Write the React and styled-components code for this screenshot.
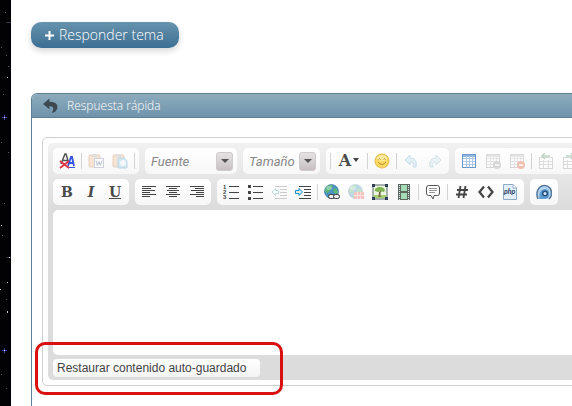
import React, {useState} from 'react'
import styled, {createGlobalStyle} from 'styled-components';

const GlobalStyle = createGlobalStyle`

    * { box-sizing: border-box; }

    body {
        margin: 0;
        background-color: #fff;
        font-family: Roboto, "Liberation Sans", sans-serif;
        font-size: 13px;
        overflow: hidden;
    }

    button, select, textarea { font-family: inherit; }
`;

const Layout = styled.div`
    display: flex;
    min-height: 100vh;
`;

const Space = styled.aside`
    flex: 0 0 11px;
    background-color: #020204;
    overflow: hidden;

    svg { display: block; }
`;

const Main = styled.main`
    flex: 1;
    min-width: 0;
    display: flex;
    flex-direction: column;
    align-items: flex-start;
    padding: 22px 0 0 20px;
    overflow: hidden;
`;

const ReplyLink = styled.a`
    display: flex;
    align-items: center;
    gap: 5px;
    height: 26px;
    padding: 0 15px 0 14px;
    border-radius: 10px;
    background-image: linear-gradient(#6793ad, #3c6f93);
    box-shadow: 0 3px 6px rgba(0, 0, 0, .16);
    color: #fff;
    font-family: "Open Sans", "Noto Sans", sans-serif;
    font-size: 14px;
    font-weight: 300;
    line-height: 24px;
    text-decoration: none;
`;

const Panel = styled.section`
    flex: 1;
    width: 100%;
    min-width: 680px;
    margin-top: 45px;
    border: 1px solid #5e7f94;
    border-bottom: 0;
    border-radius: 6px 6px 0 0;
    overflow: hidden;
`;

const PanelTitle = styled.h2`
    display: flex;
    align-items: center;
    gap: 8px;
    height: 24px;
    margin: 0;
    padding: 0 10px;
    border-bottom: 1px solid #5e7f94;
    background-image: linear-gradient(#8dabbd, #6f94ac);
    color: #fff;
    font-family: "Open Sans", "Noto Sans", sans-serif;
    font-size: 12px;
    font-weight: 300;
`;

const Editor = styled.div`
    margin: 19px 10px;
    padding: 5px;
    border: 1px solid #d0d0d0;
    border-radius: 5px;
`;

const EditorBody = styled.div`
    padding: 5px 5px 3px;
    border-radius: 5px;
    background: #dcdcdc linear-gradient(#f1f1f1, #dcdcdc) no-repeat;
    background-size: 100% 64px;
`;

const ToolRow = styled.div`
    display: flex;
    gap: 6px;
    margin-bottom: 5px;
`;

const ToolGroup = styled.div`
    flex: none;
    display: flex;
    align-items: center;
    height: 26px;
    padding: 0 2px;
    border-radius: 5px;
    background-image: linear-gradient(#fff, #f7f7f7);
`;

const ToolButton = styled.button`
    display: flex;
    align-items: center;
    justify-content: center;
    gap: 2px;
    width: ${props => props.$wide ? '32px' : '24px'};
    height: 24px;
    padding: 0;
    border: 0;
    background: none;
    opacity: ${props => props.disabled ? '.35' : '1'};

    svg { display: block; flex: none; }
`;

const Separator = styled.span`
    width: 1px;
    height: 16px;
    margin: 0 2px;
    background-color: #d2d2d2;
`;

const Letter = styled.span`
    color: #4a4a4a;
    font-family: "DejaVu Serif", serif;
    font-size: ${props => props.$size || '14px'};
    font-weight: bold;
    font-style: ${props => props.$italic ? 'italic' : 'normal'};
    text-decoration: ${props => props.$underline ? 'underline' : 'none'};
    line-height: 16px;
`;

const Combo = styled.label`
    position: relative;
    display: flex;
    align-items: center;
    width: ${props => props.$width};
    height: 24px;
`;

const ComboSelect = styled.select`
    width: 100%;
    height: 24px;
    padding: 0 20px 0 4px;
    border: 0;
    appearance: none;
    background: none;
    color: #888;
    font-size: 13px;
    font-style: italic;
`;

const ComboArrow = styled.span`
    position: absolute;
    right: 2px;
    display: flex;
    align-items: center;
    justify-content: center;
    width: 17px;
    height: 19px;
    border: 1px solid #cfcacb;
    border-radius: 3px;
    background-image: linear-gradient(#e6e2e3, #c6c0c2);
    pointer-events: none;
`;

const Content = styled.textarea`
    display: block;
    width: 100%;
    height: 145px;
    padding: 8px;
    border: 0;
    border-radius: 5px;
    outline: 0;
    resize: none;
    background-color: #fff;
`;

const Footer = styled.div`
    display: flex;
    padding-top: 4px;
`;

// keeps the red mark around the restore button
const Callout = styled.div`
    position: relative;

    &::after {
        content: '';
        position: absolute;
        inset: -17px -23px -18px -18px;
        border: 3px solid #d9100f;
        border-radius: 10px;
        pointer-events: none;
    }
`;

const RestoreButton = styled.button`
    display: block;
    min-width: 207px;
    height: 18px;
    padding: 0 7px 0 4px;
    border: 0;
    border-radius: 4px;
    background-image: linear-gradient(#fff, #f4f4f4);
    color: #444;
    font-family: "Liberation Sans", Arial, sans-serif;
    font-size: 12px;
    line-height: 18px;
    text-align: left;
`;

const Icon = ({children, size = 16}) => (
    <svg width={size} height={size} viewBox="0 0 16 16" fill="none" aria-hidden="true">{children}</svg>
)

const Lines = ({rows, color = '#444'}) => rows.map(([x1, x2, y]) => (
    <rect key={y} x={x1} y={y} width={x2 - x1} height="1" fill={color} />
))

const Stars = () => (
    <svg width="11" height="406" aria-hidden="true">
        <g fill="#5a5a66">
            <rect x="5" y="12" width="1" height="1" /><rect x="6" y="55" width="1" height="1" />
            <rect x="1" y="47" width="1" height="1" /><rect x="8" y="66" width="1" height="1" />
            <rect x="3" y="94" width="1" height="1" /><rect x="1" y="142" width="1" height="1" />
            <rect x="8" y="152" width="1" height="1" /><rect x="4" y="203" width="1" height="1" />
            <rect x="2" y="235" width="1" height="1" /><rect x="6" y="299" width="1" height="1" />
            <rect x="1" y="374" width="1" height="1" /><rect x="6" y="388" width="1" height="1" />
        </g>
        <g fill="#c8c8e0">
            <rect x="1" y="225" width="1" height="1" /><rect x="7" y="282" width="1" height="1" />
            <rect x="0" y="289" width="1" height="1" /><rect x="7" y="77" width="1" height="1" />
            <rect x="7" y="311" width="1" height="2" /><rect x="10" y="22" width="1" height="1" />
        </g>
        <path d="M6 22.5H11M6 257.5H11" stroke="#33374a" />
        <path d="M2 117.5H7M4.5 115V120M2 350.5H7M4.5 348V353" stroke="#3b3b98" />
        <rect x="4" y="117" width="1" height="1" fill="#dde" />
        <rect x="4" y="350" width="1" height="1" fill="#dde" />
        <rect x="9" y="257" width="1" height="1" fill="#dde" />
    </svg>
)

const Clipboard = ({children}) => (
    <Icon>
        <rect x="1" y="2" width="11" height="12" rx="1" fill="#f0b884" stroke="#c58a5a" />
        <rect x="4" y="1" width="5" height="3" fill="#aaa" />
        {children}
    </Icon>
)

const Outdent = () => (
    <Icon>
        <Lines rows={[[4, 16, 2], [9, 16, 5], [9, 16, 8], [9, 16, 11], [4, 16, 14]]} color="#777" />
        <path d="M1 8L4.5 4.5V6.5H7.5V9.5H4.5V11.5Z" fill="#fff" stroke="#3b9fc2" />
    </Icon>
)

const Indent = () => (
    <Icon>
        <Lines rows={[[4, 16, 2], [9, 16, 5], [9, 16, 8], [9, 16, 11], [4, 16, 14]]} />
        <path d="M7.5 8L4 4.5V6.5H.5V9.5H4V11.5Z" fill="#d5effa" stroke="#168bbd" />
    </Icon>
)

const NumberedList = () => (
    <Icon>
        <Lines rows={[[6, 16, 2], [6, 16, 8], [6, 16, 14]]} />
        <g fill="#444" fontSize="6" fontWeight="bold" fontFamily="Liberation Sans, sans-serif">
            <text x="0" y="5">1</text><text x="0" y="10">2</text><text x="0" y="15">3</text>
        </g>
    </Icon>
)

const BulletList = () => (
    <Icon>
        <Lines rows={[[6, 16, 2], [6, 16, 8], [6, 16, 14]]} />
        <g fill="#444">
            <rect x="1" y="1" width="3" height="3" /><rect x="1" y="7" width="3" height="3" /><rect x="1" y="13" width="3" height="3" />
        </g>
    </Icon>
)

const Globe = ({children}) => (
    <Icon>
        <circle cx="7.5" cy="7.5" r="7" fill="#4a93c4" stroke="#3b749c" strokeWidth=".6" />
        <path d="M1 7C1 3 4 1 7 1C10 1 9 3 7 4C8 6 5 6 5 8C4 10 2 9 1 7ZM9 5C12 3 14 6 14 8C13 11 11 10 10 9ZM4 11L8 10L9 14L6 14Z" fill="#59b678" />
        <ellipse cx="5" cy="4" rx="3" ry="2" fill="#fff" opacity=".35" />
        {children}
    </Icon>
)

const Table = ({mark}) => (
    <Icon>
        <rect x="1.5" y="1.5" width="13" height="13" fill="#fff" stroke={mark ? '#999' : '#6a97cc'} />
        <rect x="2" y="2" width="12" height="2" fill={mark ? '#bbb' : '#8fb6df'} />
        <path d="M2 5.5H14M2 8.5H14M2 11.5H14M5.5 3V14M8.5 3V14M11.5 3V14" stroke={mark ? '#bbb' : '#a9c5e8'} />
        {mark && <>
            <circle cx="12" cy="12" r="4" fill={mark} />
            <path d="M10 12H14" stroke="#fff" strokeWidth="1.5" />
        </>}
    </Icon>
)

const TableInsert = ({flip}) => (
    <Icon>
        <rect x="1.5" y="4.5" width="13" height="11" fill="#fff" stroke="#999" />
        <path d="M2 8.5H14M2 11.5H14M5.5 7V15M10.5 7V15" stroke="#aaa" />
        <path d={flip ? 'M4 3H12M9 0L12 3L9 6' : 'M12 3H4M7 0L4 3L7 6'} stroke="#4f8d5f" strokeWidth="1.5" />
    </Icon>
)

const App = () => {
    const [text, setText] = useState('')

    return (
        <>
            <GlobalStyle />
            <Layout>
                <Space><Stars /></Space>
                <Main>
                    <ReplyLink href="#respuesta">
                        <svg width="9" height="9" aria-hidden="true"><path d="M4.5 0V9M0 4.5H9" stroke="#fff" strokeWidth="2" /></svg>
                        Responder tema
                    </ReplyLink>

                    <Panel id="respuesta">
                        <PanelTitle>
                            <Icon size={17}>
                                <path d="M1 6.5L7 1.5V4.5C12 4 15 7 14.5 10C14 13 11.5 14.5 9 15C11.5 12 11.5 8.5 7 8.5V11.5Z" fill="#3d4850" />
                            </Icon>
                            Respuesta rápida
                        </PanelTitle>

                        <Editor>
                            <EditorBody>
                                <ToolRow>
                                    <ToolGroup>
                                        <ToolButton aria-label="Quitar formato">
                                            <Icon>
                                                <path d="M2 11L6 1H7L10 11M3.5 7.5H9" stroke="#555" strokeWidth="1.5" />
                                                <path d="M9 13L12 4H13L15 13M10 10H14" stroke="#3454e0" strokeWidth="1.8" />
                                                <path d="M8 14.5H16" stroke="#3454e0" />
                                                <path d="M1 8L10 15M10 8L1 15" stroke="#e23440" strokeWidth="1.8" />
                                            </Icon>
                                        </ToolButton>
                                        <Separator />
                                        <ToolButton disabled aria-label="Pegar desde Word">
                                            <Clipboard>
                                                <rect x="6.5" y="5.5" width="9" height="9" fill="#fff" stroke="#7787a8" />
                                                <path d="M8 7.5L9.5 12.5L11 8.5L12.5 12.5L14 7.5" stroke="#34507f" />
                                            </Clipboard>
                                        </ToolButton>
                                        <ToolButton disabled aria-label="Pegar">
                                            <Clipboard>
                                                <path d="M6 5H12L15 8V15H6Z" fill="#8cc5e5" stroke="#5597bd" />
                                                <circle cx="11" cy="10" r="3" fill="#e6f5ff" />
                                            </Clipboard>
                                        </ToolButton>
                                        <Separator />
                                    </ToolGroup>
                                    <ToolGroup>
                                        <Combo $width="88px">
                                            <ComboSelect aria-label="Fuente"><option>Fuente</option></ComboSelect>
                                            <ComboArrow><svg width="8" height="4" aria-hidden="true"><path d="M0 0H8L4 4Z" fill="#555" /></svg></ComboArrow>
                                        </Combo>
                                    </ToolGroup>
                                    <ToolGroup>
                                        <Combo $width="73px">
                                            <ComboSelect aria-label="Tamaño"><option>Tamaño</option></ComboSelect>
                                            <ComboArrow><svg width="8" height="4" aria-hidden="true"><path d="M0 0H8L4 4Z" fill="#555" /></svg></ComboArrow>
                                        </Combo>
                                    </ToolGroup>
                                    <ToolGroup>
                                        <Separator />
                                        <ToolButton $wide aria-label="Color de texto">
                                            <Letter $size="16px">A</Letter>
                                            <svg width="6" height="6" aria-hidden="true"><path d="M0 0H6L3 4Z" fill="#444" /></svg>
                                        </ToolButton>
                                        <Separator />
                                        <ToolButton aria-label="Emoticonos">
                                            <Icon>
                                                <circle cx="8" cy="8" r="7" fill="#fada62" stroke="#e3b647" />
                                                <ellipse cx="8" cy="5" rx="5" ry="3" fill="#fff" opacity=".4" />
                                                <path d="M4.5 6.5Q5.5 5 6.5 6.5M9.5 6.5Q10.5 5 11.5 6.5M4 9Q8 14 12 9" stroke="#bd8a2c" />
                                            </Icon>
                                        </ToolButton>
                                        <Separator />
                                        <ToolButton disabled aria-label="Deshacer">
                                            <Icon><path d="M2 7L7 2V5C12 5 14 8 13 14H10C11 10 10 9 7 9V12Z" fill="#b6dcef" stroke="#6ba9cc" /></Icon>
                                        </ToolButton>
                                        <ToolButton disabled aria-label="Rehacer">
                                            <Icon><path d="M14 7L9 2V5C4 5 2 8 3 14H6C5 10 6 9 9 9V12Z" fill="#c9e2ea" stroke="#86b7c9" /></Icon>
                                        </ToolButton>
                                    </ToolGroup>
                                    <ToolGroup>
                                        <ToolButton aria-label="Tabla"><Table /></ToolButton>
                                        <ToolButton disabled aria-label="Propiedades de tabla"><Table mark="#9a9a9a" /></ToolButton>
                                        <ToolButton disabled aria-label="Eliminar tabla"><Table mark="#e0562b" /></ToolButton>
                                        <Separator />
                                        <ToolButton disabled aria-label="Insertar fila antes"><TableInsert /></ToolButton>
                                        <ToolButton disabled aria-label="Insertar fila después"><TableInsert flip /></ToolButton>
                                    </ToolGroup>
                                </ToolRow>

                                <ToolRow>
                                    <ToolGroup>
                                        <ToolButton aria-label="Negrita"><Letter>B</Letter></ToolButton>
                                        <ToolButton aria-label="Cursiva"><Letter $italic>I</Letter></ToolButton>
                                        <ToolButton aria-label="Subrayado"><Letter $underline>U</Letter></ToolButton>
                                    </ToolGroup>
                                    <ToolGroup>
                                        <ToolButton aria-label="Alinear a la izquierda">
                                            <Icon><Lines rows={[[1, 15, 2], [1, 10, 4], [1, 14, 6], [1, 9, 8], [1, 15, 10], [1, 9, 12]]} /></Icon>
                                        </ToolButton>
                                        <ToolButton aria-label="Centrar">
                                            <Icon><Lines rows={[[1, 15, 2], [4, 12, 4], [2, 14, 6], [4, 12, 8], [1, 15, 10], [4, 12, 12]]} /></Icon>
                                        </ToolButton>
                                        <ToolButton aria-label="Alinear a la derecha">
                                            <Icon><Lines rows={[[1, 15, 2], [6, 15, 4], [2, 15, 6], [7, 15, 8], [1, 15, 10], [7, 15, 12]]} /></Icon>
                                        </ToolButton>
                                    </ToolGroup>
                                    <ToolGroup>
                                        <ToolButton aria-label="Lista numerada"><NumberedList /></ToolButton>
                                        <ToolButton aria-label="Lista"><BulletList /></ToolButton>
                                        <ToolButton disabled aria-label="Reducir sangría"><Outdent /></ToolButton>
                                        <ToolButton aria-label="Aumentar sangría"><Indent /></ToolButton>
                                        <Separator />
                                        <ToolButton aria-label="Enlace">
                                            <Globe>
                                                <rect x="4.5" y="10.5" width="6" height="4" rx="2" fill="#eee" stroke="#333" />
                                                <rect x="9.5" y="10.5" width="6" height="4" rx="2" fill="#eee" stroke="#333" />
                                            </Globe>
                                        </ToolButton>
                                        <ToolButton disabled aria-label="Quitar enlace">
                                            <Globe><rect x="6" y="8" width="10" height="7" fill="#e66055" /><path d="M6 11.5H16M9.5 8V15M12.5 8V15" stroke="#f7b6ae" /></Globe>
                                        </ToolButton>
                                        <ToolButton aria-label="Imagen">
                                            <Icon>
                                                <rect x="1" y="1" width="14" height="14" fill="#eaf5df" stroke="#5b6a70" />
                                                <rect x="2" y="11" width="12" height="3" fill="#a5cd70" />
                                                <path d="M7 13L7.5 8L5 6M8 13V8L11 6" stroke="#6b5530" />
                                                <path d="M3 7C2 5 5 3 8 3C12 3 14 6 12 8L9 7L6 8Z" fill="#7fb551" />
                                                <path d="M0 0H3V3H0ZM13 0H16V3H13ZM0 13H3V16H0ZM13 13H16V16H13Z" fill="#2f3f56" />
                                            </Icon>
                                        </ToolButton>
                                        <ToolButton aria-label="Vídeo">
                                            <Icon>
                                                <rect x="2" y="0" width="12" height="16" fill="#5a6a62" />
                                                <path d="M5 1H11V7H5ZM5 9H11V15H5Z" fill="#a8d9b5" />
                                                <path d="M3.5 1V16M12.5 1V16" stroke="#e5ece8" strokeDasharray="1 1" />
                                            </Icon>
                                        </ToolButton>
                                        <Separator />
                                        <ToolButton aria-label="Cita">
                                            <Icon>
                                                <path d="M3.5 1.5H12.5Q14.5 1.5 14.5 4V9Q14.5 11.5 12.5 11.5H9L8 15L6 11.5H3.5Q1.5 11.5 1.5 9V4Q1.5 1.5 3.5 1.5Z" fill="#fff" stroke="#555" />
                                                <path d="M4 4.5H12M4 6.5H12M4 8.5H10" stroke="#999" />
                                            </Icon>
                                        </ToolButton>
                                        <Separator />
                                        <ToolButton aria-label="Código">
                                            <Icon><path d="M6.5 2L4.5 14M11.5 2L9.5 14M3 6H14M2 10.5H13" stroke="#444" strokeWidth="1.8" /></Icon>
                                        </ToolButton>
                                        <ToolButton aria-label="HTML">
                                            <Icon><path d="M6 2.5L1.5 8L6 13.5M10 2.5L14.5 8L10 13.5" stroke="#444" strokeWidth="2.2" /></Icon>
                                        </ToolButton>
                                        <ToolButton aria-label="PHP">
                                            <Icon>
                                                <path d="M1.5 .5H11L14.5 4V15.5H1.5Z" fill="#e3effb" stroke="#8fa9c9" />
                                                <path d="M11 .5V4H14.5" fill="#fff" stroke="#8fa9c9" />
                                                <text x="2" y="10" fontSize="7" fontWeight="bold" fontStyle="italic" fill="#34476b">php</text>
                                            </Icon>
                                        </ToolButton>
                                    </ToolGroup>
                                    <ToolGroup>
                                        <ToolButton aria-label="Spoiler">
                                            <Icon>
                                                <path d="M2 15C-1 8 3 1.5 8.5 1.5C13 1.5 15.5 5 15.5 9C15.5 12 14.5 14 13 15" fill="#b4d6f2" stroke="#55789c" strokeWidth="1.5" />
                                                <path d="M3.5 15C2.5 9 5 5 9 5C13 5 14.5 10 12 14L9 15Z" fill="#5f9bd0" />
                                                <circle cx="9" cy="9.5" r="3" fill="#26527c" />
                                                <circle cx="9" cy="9.5" r="1.5" fill="#d4eaff" />
                                            </Icon>
                                        </ToolButton>
                                    </ToolGroup>
                                </ToolRow>

                                <Content aria-label="Mensaje" value={text} onChange={e => setText(e.target.value)} />

                                <Footer>
                                    <Callout>
                                        <RestoreButton type="button">Restaurar contenido auto-guardado</RestoreButton>
                                    </Callout>
                                </Footer>
                            </EditorBody>
                        </Editor>
                    </Panel>
                </Main>
            </Layout>
        </>
    )
}

export default App
